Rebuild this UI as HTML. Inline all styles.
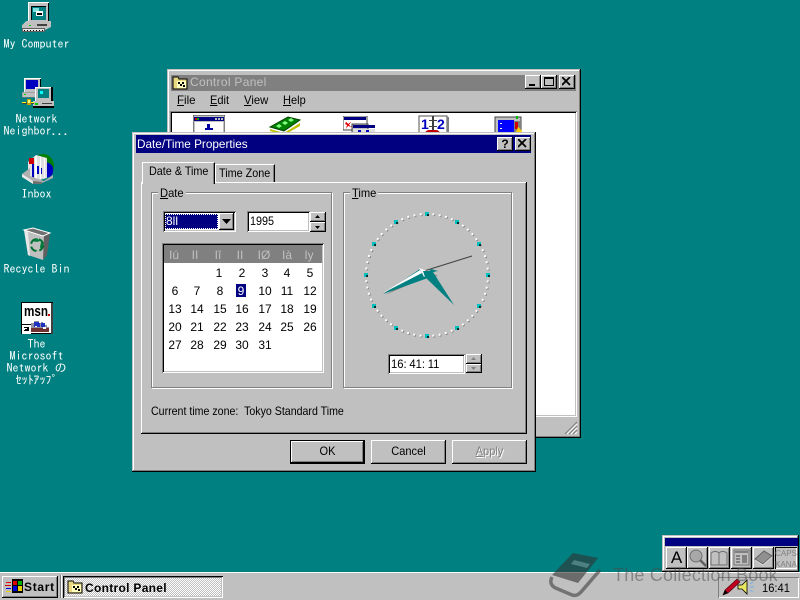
<!DOCTYPE html>
<html><head><meta charset="utf-8">
<style>
html,body{margin:0;padding:0;width:800px;height:600px;overflow:hidden;background:#008080}
*{box-sizing:border-box}
body{position:relative;font-family:"Liberation Sans","Noto Sans CJK JP",sans-serif;font-size:12px;color:#000}
.a,.t,svg.a{position:absolute}
.t{white-space:pre;line-height:14px;transform-origin:0 0}
.g{background:#c0c0c0}
.win{box-shadow:inset -1px -1px #000,inset 1px 1px #c0c0c0,inset -2px -2px #808080,inset 2px 2px #fff;background:#c0c0c0}
.btn{box-shadow:inset -1px -1px #000,inset 1px 1px #fff,inset -2px -2px #808080;background:#c0c0c0}
.sunk{box-shadow:inset 1px 1px #808080,inset -1px -1px #fff,inset 2px 2px #000,inset -2px -2px #c0c0c0;background:#fff}
.etch{border:1px solid #808080;box-shadow:1px 1px #fff,inset 1px 1px #fff}
.lab{font-family:"IPAGothic","Liberation Mono",monospace;color:#fff;font-size:12px;line-height:12px;text-align:center;white-space:pre;position:absolute}
.d{position:absolute;width:22px;text-align:center;font-size:12px;line-height:14px;letter-spacing:0}
u{text-decoration:underline}
.n{display:block;transform-origin:50% 50%;transform:scaleX(.92)}
</style></head><body>

<!-- Desktop icons -->
<svg class="a" style="left:20px;top:0" width="32" height="34" viewBox="0 0 32 34" shape-rendering="crispEdges">
<path d="M8 2h21v20H8z" fill="#c0c0c0"/><path d="M8 2h21v1H9v19H8z" fill="#fff"/><path d="M28 3h1v19h-1z" fill="#000"/>
<path d="M11 6h15v14H11z" fill="#000"/><path d="M12 7h14v13H12z" fill="#008080"/><path d="M13 8h6v4h-6z" fill="#80e0e0"/><path d="M16 11h7v5h-7z" fill="#fff"/><path d="M17 13h5v2h-5z" fill="#000"/>
<path d="M6 21h25v6l-6 3H2v-5z" fill="#c0c0c0"/><path d="M2 28h23v4H2z" fill="#606060"/><path d="M3 29h21v2H3z" fill="#e8e8e8"/><path d="M4 30h1v1h-1zM7 30h1v1H7zM10 30h1v1h-1zM13 30h1v1h-1zM16 30h1v1h-1zM19 30h1v1h-1zM22 30h1v1h-1z" fill="#000"/>
<path d="M9 25h2v1H9z" fill="#0c0"/><path d="M17 24h10v2H17z" fill="#404040"/>
</svg>
<div class="lab" style="left:0;top:38px;width:73px">My Computer</div>

<svg class="a" style="left:21px;top:77px" width="33" height="32" viewBox="0 0 33 32" shape-rendering="crispEdges">
<path d="M3 1h17v17H3z" fill="#c0c0c0"/><path d="M3 1h17v1H4v16H3z" fill="#fff"/><path d="M5 3h12v9H5z" fill="#0000c0"/><path d="M19 2h1v16h-1z" fill="#000"/>
<path d="M1 15h20v5H1z" fill="#c0c0c0" stroke="#808080" stroke-width=".5"/><path d="M3 17h2v1H3z" fill="#0c0"/>
<path d="M14 10h17v16H14z" fill="#c0c0c0"/><path d="M14 10h17v1H15v15h-1z" fill="#fff"/><path d="M30 10h2v16h-2z" fill="#000"/><path d="M17 12h11v9H17z" fill="#008080"/><path d="M19 14h3v3h-3z" fill="#00ffff"/>
<path d="M12 24h21v6H12z" fill="#c0c0c0"/><path d="M12 29h21v2H12z" fill="#000"/><path d="M14 26h3v2h-3z" fill="#0c0"/><path d="M21 26h10v1H21z" fill="#404040"/>
<path d="M1 25h4v1H1zM8 25h5v1H8z" fill="#ff0"/><path d="M1 26h12v1H1z" fill="#404040"/><path d="M6 22h4v6H6z" fill="#c0a000"/><path d="M7 23h2v3H7z" fill="#ffff80"/>
</svg>
<div class="lab" style="left:0;top:113px;width:73px">Network
Neighbor...</div>

<svg class="a" style="left:21px;top:152px" width="34" height="32" viewBox="0 0 34 32">
<ellipse cx="22" cy="14" rx="11" ry="12" fill="#008000"/><path d="M22 10c8 0 11 4 10 10-1 5-5 6-10 6z" fill="#0000c0"/>
<path d="M7 10l8-7 11 3v20l-11 3-8-5z" fill="#e0e0e0"/><path d="M8 6h5v6H8z" fill="#d00000"/><path d="M14 4h2v25h-2zM19 5h1v22h-1zM23 6h1v20h-1z" fill="#fff"/>
<path d="M11 12h2v14h-2z" fill="#0000c0"/><path d="M16 14h2v8h-2zM20 16h1v6h-1z" fill="#0000c0"/>
<path d="M1 22l8-6v8l14 5 9-6v3l-11 5H12L1 25z" fill="#b0b0b0"/><path d="M1 22l11 7 9 3-9 0L1 25z" fill="#e8e8e8"/><path d="M12 29l9 1v2h-9z" fill="#707070"/>
</svg>
<div class="lab" style="left:0;top:188px;width:73px">Inbox</div>

<svg class="a" style="left:22px;top:227px" width="31" height="34" viewBox="0 0 31 34">
<path d="M2 3L11 1l17 5-3 1-3 25-1 1-15-5z" fill="#c0c0c0"/><path d="M2 3l4 25 2 1L6 5z" fill="#e8e8e8"/><path d="M21 33l1-26 6-1-3 22z" fill="#606060"/><path d="M2 3l9-2 17 5-7 3z" fill="#707070" stroke="#fff" stroke-width="1"/>
<path d="M10 14l5-3 3 3-3 1zM19 15l3 5-3 3-1-3zM9 19l4 5h4l-6-1z" fill="#008040"/><circle cx="15" cy="18" r="6" fill="none" stroke="#007030" stroke-width="2" stroke-dasharray="7 3"/>
</svg>
<div class="lab" style="left:0;top:263px;width:73px">Recycle Bin</div>

<svg class="a" style="left:21px;top:302px" width="32" height="32" viewBox="0 0 32 32">
<g shape-rendering="crispEdges"><path d="M0 0h32v32H0z" fill="#000"/><path d="M1 1h29v30H1z" fill="#fff"/><path d="M30 1h2v31h-2z" fill="#404040"/></g>
<text x="3" y="14" font-family="Liberation Sans" font-weight="bold" font-size="15" textLength="24" lengthAdjust="spacingAndGlyphs" fill="#000">msn</text>
<g shape-rendering="crispEdges"><path d="M27 12h2v2h-2z" fill="#d00000"/>
<path d="M6 26h2v-3h2v-2h3v-2h6v1h3v1h2v2h2v2h2v5H6z" fill="#9090a0"/><path d="M13 20h6v5h-6zM20 21h4v4h-4z" fill="#2030c0"/><path d="M10 26h18v4H10z" fill="#703030"/><path d="M18 19h2v2h-2zM14 24h2v1h-2zM22 25h3v2h-3z" fill="#fff"/>
<path d="M0 22h10v10H0z" fill="#fff"/><path d="M0 22h10v1H1v9H0z" fill="#000"/><path d="M3 25h5v1H3zM6 26h2v3H6zM3 29h3v-1H3zM4 27h2v1H4z" fill="#000"/></g>
</svg>
<div class="lab" style="left:0;top:338px;width:73px">The
Microsoft
Network の
ｾｯﾄｱｯﾌﾟ</div>

<!-- Control Panel window -->
<div class="a win" style="left:167px;top:69px;width:414px;height:369px"></div>
<div class="a" style="left:171px;top:75px;width:405px;height:16px;background:#808080"></div>
<svg class="a" style="left:172px;top:76px" width="16" height="14" viewBox="0 0 16 14" shape-rendering="crispEdges"><path d="M1 1h5l1 2h8v10H1z" fill="#e8d880" stroke="#000" stroke-width=".8"/><path d="M5 5h9v7H5z" fill="#ffffc0"/><path d="M6 6h2v2H6zM10 6h2v2h-2zM8 8h2v2H8zM11 9h2v2h-2z" fill="#000"/></svg>
<div class="t" style="left:190px;top:75px;color:#c0c0c0;letter-spacing:.3px">Control Panel</div>
<div class="a btn" style="left:525px;top:75px;width:16px;height:14px"><div class="a" style="left:4px;top:9px;width:6px;height:2px;background:#000"></div></div>
<div class="a btn" style="left:541px;top:75px;width:16px;height:14px"><div class="a" style="left:3px;top:2px;width:10px;height:9px;border:1px solid #000;border-top-width:2px"></div></div>
<div class="a btn" style="left:559px;top:75px;width:16px;height:14px"><svg class="a" style="left:3px;top:2px" width="9" height="9"><path d="M0 0l8 8M8 0l-8 8" stroke="#000" stroke-width="1.800"/></svg></div>
<div class="t" style="left:177px;top:93px;transform:scaleX(.96)"><u>F</u>ile</div>
<div class="t" style="left:210px;top:93px;transform:scaleX(.92)"><u>E</u>dit</div>
<div class="t" style="left:244px;top:93px;transform:scaleX(.94)"><u>V</u>iew</div>
<div class="t" style="left:283px;top:93px;transform:scaleX(.92)"><u>H</u>elp</div>
<div class="a sunk" style="left:170px;top:111px;width:407px;height:306px"></div>
<!-- CP icons -->
<svg class="a" style="left:193px;top:115px" width="32" height="20" viewBox="0 0 32 20" shape-rendering="crispEdges"><path d="M0 0h32v20H0z" fill="#c0c0c0" stroke="#404040"/><path d="M1 2h30v4H1z" fill="#000080"/><path d="M2 3h2v2H2z" fill="#c00"/><path d="M4 3h2v2H4z" fill="#0a0"/><path d="M22 3h2v2h-2zM25 3h2v2h-2zM28 3h2v2h-2z" fill="#c0c0c0"/><path d="M2 7h28v13H2z" fill="#fff"/><path d="M14 9h3v4h-3zM12 13h8v2h-8z" fill="#0000a0"/></svg>
<svg class="a" style="left:268px;top:115px" width="34" height="20" viewBox="0 0 34 20"><path d="M2 12L20 2l12 3-16 11z" fill="#008000" stroke="#004000"/><path d="M8 11l3-2 3 2-3 2zM14 8l3-2 3 2-3 2zM20 5l3-2 3 2-3 2z" fill="#80ff80"/><path d="M2 14l14 4 16-10v3L16 20 2 16z" fill="#c0c000"/><path d="M4 17l12 3h8l-8 0z" fill="#606060"/></svg>
<svg class="a" style="left:343px;top:116px" width="33" height="19" viewBox="0 0 33 19" shape-rendering="crispEdges"><path d="M0 0h24v14H0z" fill="#fff" stroke="#404040"/><path d="M1 1h22v3H1z" fill="#000080"/><path d="M3 6l2 2 3-2-2 3 3 2-4-1-2 3 1-4-2-1z" fill="#e00000"/><path d="M9 8h16v11H9z" fill="#c0c0c0" stroke="#404040"/><path d="M10 9h22v3H10z" fill="#000080"/><path d="M10 13h22v6H10z" fill="#e0e0e0"/><path d="M15 14h3v4h-3zM23 14h3v4h-3z" fill="#0000c0"/></svg>
<svg class="a" style="left:418px;top:115px" width="31" height="20" viewBox="0 0 31 20" shape-rendering="crispEdges"><path d="M1 1h28v19H1z" fill="#fff" stroke="#505050"/><path d="M29 2h2v18h-2z" fill="#808080"/><path d="M14 1h2v14h-2zM11 5h8v1h-8zM11 11h8v1h-8z" fill="#404040"/></svg>
<div class="t" style="left:421px;top:117px;font-weight:bold;font-size:14px;color:#0000c0;letter-spacing:0">1</div>
<div class="t" style="left:437px;top:117px;font-weight:bold;font-size:14px;color:#0000c0;letter-spacing:0">2</div>
<div class="a" style="left:425px;top:130px;width:15px;height:4px;background:#c00000;border-radius:7px 7px 0 0"></div>
<svg class="a" style="left:494px;top:115px" width="30" height="20" viewBox="0 0 30 20" shape-rendering="crispEdges"><path d="M1 2h26v18H1z" fill="#c0c0c0" stroke="#404040"/><path d="M4 5h16v15H4z" fill="#0000ff"/><path d="M6 8h2v1H6zM6 13h2v1H6z" fill="#fff"/><path d="M20 6h6v14h-6z" fill="#808080"/><path d="M21 4h3V1h-2v3z" fill="#00c000"/><path d="M21 7h3v7h-3z" fill="#d00000"/><path d="M24 12l4 4-3 4-3-3z" fill="#ffd000"/></svg>
<!-- Resize grip -->
<svg class="a" style="left:564px;top:421px" width="14" height="14"><path d="M13 1L1 13M13 5l-8 8M13 9l-4 4" stroke="#808080" stroke-width="1.200"/><path d="M13 3L3 13M13 7l-6 6M13 11l-2 2" stroke="#fff" stroke-width="1"/></svg>

<!-- Dialog -->
<div class="a win" style="left:132px;top:132px;width:404px;height:340px"></div>
<div class="a" style="left:136px;top:135px;width:395px;height:18px;background:#000080"></div>
<div class="t" style="left:137px;top:137px;color:#fff;transform:scaleX(.98)">Date/Time Properties</div>
<div class="a btn" style="left:497px;top:137px;width:16px;height:14px;font-weight:bold;font-size:12px;line-height:14px;text-align:center">?</div>
<div class="a btn" style="left:515px;top:137px;width:16px;height:14px"><svg class="a" style="left:3px;top:2px" width="9" height="9"><path d="M0 0l8 8M8 0l-8 8" stroke="#000" stroke-width="1.800"/></svg></div>

<!-- Tab panel -->
<div class="a" style="left:141px;top:182px;width:386px;height:252px;box-shadow:inset -1px -1px #000,inset 1px 1px #fff,inset -2px -2px #808080"></div>
<div class="a" style="left:215px;top:164px;width:60px;height:18px;background:#c0c0c0;border-top:1px solid #fff;border-left:1px solid #fff;border-right:1px solid #000;box-shadow:inset -1px 0 #808080"></div>
<div class="t" style="left:219px;top:166px;transform:scaleX(.9)">Time Zone</div>
<div class="a" style="left:142px;top:162px;width:73px;height:22px;background:#c0c0c0;border-top:1px solid #fff;border-left:1px solid #fff;border-right:1px solid #000;box-shadow:inset -1px 0 #808080"></div>
<div class="t" style="left:149px;top:164px;transform:scaleX(.9)">Date &amp; Time</div>

<!-- Groups -->
<div class="a etch" style="left:151px;top:192px;width:181px;height:196px"></div>
<div class="a g" style="left:158px;top:186px;width:28px;height:14px"></div>
<div class="t" style="left:160px;top:186px;transform:scaleX(.93)"><u>D</u>ate</div>
<div class="a etch" style="left:343px;top:192px;width:169px;height:196px"></div>
<div class="a g" style="left:350px;top:186px;width:28px;height:14px"></div>
<div class="t" style="left:352px;top:186px;transform:scaleX(.93)"><u>T</u>ime</div>

<!-- Month combo -->
<div class="a sunk" style="left:163px;top:211px;width:73px;height:21px"></div>
<div class="a" style="left:165px;top:214px;width:53px;height:15px;background:#000080;outline:1px dotted #fff;outline-offset:-1px"></div>
<div class="t" style="left:166px;top:214px;color:#fff">8ll</div>
<div class="a btn" style="left:219px;top:213px;width:15px;height:17px"><svg class="a" style="left:3px;top:6px" width="9" height="5"><path d="M0 0h9L4.500 5z" fill="#000"/></svg></div>

<!-- Year -->
<div class="a sunk" style="left:247px;top:211px;width:63px;height:21px"></div>
<div class="t" style="left:250px;top:214px;transform:scaleX(.9)">1995</div>
<div class="a btn" style="left:310px;top:212px;width:16px;height:10px"><svg class="a" style="left:5px;top:3px" width="6" height="3"><path d="M0 3h5L2.500 0z" fill="#000"/></svg></div>
<div class="a btn" style="left:310px;top:222px;width:16px;height:10px"><svg class="a" style="left:5px;top:4px" width="6" height="3"><path d="M0 0h5L2.500 3z" fill="#000"/></svg></div>

<!-- Calendar -->
<div class="a sunk" style="left:162px;top:243px;width:162px;height:130px"></div>
<div class="a" style="left:164px;top:245px;width:158px;height:18px;background:#808080"></div>
<div class="d" style="left:163px;top:248px;color:#c0c0c0">Iú</div>
<div class="d" style="left:184px;top:248px;color:#c0c0c0">II</div>
<div class="d" style="left:207px;top:248px;color:#c0c0c0">Iî</div>
<div class="d" style="left:229px;top:248px;color:#c0c0c0">II</div>
<div class="d" style="left:253px;top:248px;color:#c0c0c0">IØ</div>
<div class="d" style="left:276px;top:248px;color:#c0c0c0">Ià</div>
<div class="d" style="left:298px;top:248px;color:#c0c0c0">Iy</div>
<div class="a" style="left:236px;top:284px;width:10px;height:13px;background:#000080"></div>
<div class="d" style="left:208px;top:266px">1</div><div class="d" style="left:231px;top:266px">2</div><div class="d" style="left:254px;top:266px">3</div><div class="d" style="left:276px;top:266px">4</div><div class="d" style="left:299px;top:266px">5</div>
<div class="d" style="left:164px;top:284px">6</div><div class="d" style="left:186px;top:284px">7</div><div class="d" style="left:209px;top:284px">8</div><div class="d" style="left:230px;top:284px;color:#fff">9</div><div class="d" style="left:254px;top:284px">10</div><div class="d" style="left:276px;top:284px">11</div><div class="d" style="left:299px;top:284px">12</div>
<div class="d" style="left:164px;top:302px">13</div><div class="d" style="left:186px;top:302px">14</div><div class="d" style="left:209px;top:302px">15</div><div class="d" style="left:231px;top:302px">16</div><div class="d" style="left:254px;top:302px">17</div><div class="d" style="left:276px;top:302px">18</div><div class="d" style="left:299px;top:302px">19</div>
<div class="d" style="left:164px;top:320px">20</div><div class="d" style="left:186px;top:320px">21</div><div class="d" style="left:209px;top:320px">22</div><div class="d" style="left:231px;top:320px">23</div><div class="d" style="left:254px;top:320px">24</div><div class="d" style="left:276px;top:320px">25</div><div class="d" style="left:299px;top:320px">26</div>
<div class="d" style="left:164px;top:338px">27</div><div class="d" style="left:186px;top:338px">28</div><div class="d" style="left:209px;top:338px">29</div><div class="d" style="left:231px;top:338px">30</div><div class="d" style="left:254px;top:338px">31</div>

<!-- Clock -->
<svg class="a" style="left:345px;top:200px" width="170" height="190" viewBox="0 0 170 190">
<circle cx="82.800" cy="75.800" r="61" fill="none" stroke="#808080" stroke-width="2" stroke-dasharray="2 4.388" transform="rotate(-90 82.800 75.800)" stroke-dashoffset="1"/>
<circle cx="82" cy="75" r="61" fill="none" stroke="#fff" stroke-width="2" stroke-dasharray="2 4.388" transform="rotate(-90 82 75)" stroke-dashoffset="1"/>
<g shape-rendering="crispEdges">
<path d="M80 12h4v4h-4zM110 20h4v4h-4zM132 42h4v4h-4zM141 73h4v4h-4zM132 104h4v4h-4zM110 126h4v4h-4zM80 134h4v4h-4zM49 126h4v4h-4zM27 104h4v4h-4zM19 73h4v4h-4zM27 42h4v4h-4zM49 20h4v4h-4z" fill="#00c0c0"/>
<path d="M82 14h2v2h-2zM112 22h2v2h-2zM134 44h2v2h-2zM143 75h2v2h-2zM134 106h2v2h-2zM112 128h2v2h-2zM82 136h2v2h-2zM51 128h2v2h-2zM29 106h2v2h-2zM21 75h2v2h-2zM29 44h2v2h-2zM51 22h2v2h-2z" fill="#003030"/>
</g>
<path d="M79 71L127 56" stroke="#404040" stroke-width="1" fill="none"/>
<path d="M40 95L79 78l14-2-12-5z" fill="#808080"/>
<path d="M38 94L75 69l8 9z" fill="#008080"/>
<path d="M38 93L75 70l2 3z" fill="#fff"/>
<path d="M80 77L109 105 88 72l5-1-7-2z" fill="#008080"/>
<path d="M74 68l8 3 9 0-7 2-5 4-2-4z" fill="#fff"/>
<path d="M78 71l13-0-7 3-4 3z" fill="#008080"/>
</svg>

<!-- Time edit -->
<div class="a sunk" style="left:388px;top:354px;width:77px;height:20px"></div>
<div class="t" style="left:391px;top:357px;word-spacing:-.5px;transform:scaleX(.94)">16: 41: 11</div>
<div class="a btn" style="left:466px;top:354px;width:16px;height:10px"><svg class="a" style="left:5px;top:3px" width="6" height="3"><path d="M0 3h5L2.500 0z" fill="#808080"/></svg></div>
<div class="a btn" style="left:466px;top:364px;width:16px;height:9px"><svg class="a" style="left:5px;top:3px" width="6" height="3"><path d="M0 0h5L2.500 3z" fill="#808080"/></svg></div>

<div class="t" style="left:151px;top:404px;transform:scaleX(.885)">Current time zone:  Tokyo Standard Time</div>

<!-- Buttons -->
<div class="a" style="left:290px;top:440px;width:75px;height:24px;background:#000"></div>
<div class="a btn" style="left:291px;top:441px;width:73px;height:22px;text-align:center;line-height:21px"><span class="n">OK</span></div>
<div class="a btn" style="left:371px;top:440px;width:75px;height:24px;text-align:center;line-height:22px"><span class="n">Cancel</span></div>
<div class="a btn" style="left:452px;top:440px;width:75px;height:24px;text-align:center;line-height:23px;color:#808080;text-shadow:1px 1px #fff"><span class="n"><u>A</u>pply</span></div>

<!-- IME bar -->
<div class="a win" style="left:662px;top:535px;width:137px;height:37px"></div>
<div class="a" style="left:665px;top:538px;width:133px;height:8px;background:#000080"></div>
<div class="a btn" style="left:666px;top:547px;width:21px;height:22px;font-size:17px;line-height:22px;text-align:center">A</div>
<div class="a btn" style="left:687px;top:547px;width:21px;height:22px"><svg class="a" style="left:1px;top:2px" width="19" height="18" viewBox="0 0 19 18"><circle cx="8" cy="7" r="6" fill="#a8a8a8" stroke="#707070"/><path d="M12 11l6 6" stroke="#606060" stroke-width="2.500"/></svg></div>
<div class="a btn" style="left:709px;top:547px;width:21px;height:22px"><svg class="a" style="left:1px;top:3px" width="19" height="16" viewBox="0 0 19 16"><path d="M1 3c3-2 6-2 8 0 2-2 5-2 8 0v12H1z" fill="#c0c0c0" stroke="#707070"/><path d="M9 3v12" stroke="#707070"/></svg></div>
<div class="a btn" style="left:731px;top:547px;width:21px;height:22px"><svg class="a" style="left:2px;top:2px" width="17" height="17" viewBox="0 0 17 17" shape-rendering="crispEdges"><path d="M1 1h15v15H1z" fill="#c0c0c0" stroke="#707070"/><path d="M2 2h13v2H2zM3 6h4v2H3zM3 9h4v2H3zM3 12h4v2H3zM9 6h5v8H9z" fill="#808080"/></svg></div>
<div class="a btn" style="left:753px;top:547px;width:21px;height:22px"><svg class="a" style="left:1px;top:3px" width="19" height="16" viewBox="0 0 19 16"><path d="M1 9l9-8 8 5-9 8z" fill="#909090" stroke="#606060"/><path d="M1 10l8 5 9-8" stroke="#d8d8d8" fill="none"/></svg></div>
<div class="a" style="left:775px;top:547px;width:22px;height:22px;box-shadow:inset 1px 1px #000,inset -1px -1px #fff;background:#c0c0c0;color:#808080;font-size:8px;line-height:11px;text-align:center;padding-top:1px">CAPS<br>KANA</div>

<!-- Taskbar -->
<div class="a" style="left:0;top:572px;width:800px;height:28px;background:#c0c0c0;border-top:1px solid #fff"></div>
<div class="a btn" style="left:2px;top:576px;width:56px;height:22px"></div>
<svg class="a" style="left:5px;top:578px" width="19" height="18" viewBox="0 0 19 18" shape-rendering="crispEdges"><path d="M7 1h11v14H7z" fill="#000"/><path d="M8 3h4v4H8z" fill="#e00000"/><path d="M13 3h4v4h-4z" fill="#00b000"/><path d="M8 8h4v5H8z" fill="#0000e0"/><path d="M13 8h4v5h-4z" fill="#e8d000"/><path d="M1 4h5v1H1zM0 7h6v1H0z" fill="#e00000"/><path d="M1 10h5v1H1z" fill="#0000e0"/><path d="M1 13h5v1H1z" fill="#e8d000"/></svg>
<div class="t" style="left:24px;top:580px;font-weight:bold;font-size:12px;letter-spacing:.7px">Start</div>
<div class="a" style="left:60px;top:575px;width:2px;height:23px;background:#808080;border-right:1px solid #fff"></div>
<div class="a" style="left:63px;top:576px;width:160px;height:22px;box-shadow:inset 1px 1px #000,inset -1px -1px #fff,inset 2px 2px #808080,inset -2px -2px #c0c0c0"></div>
<div class="a" style="left:65px;top:578px;width:156px;height:18px;background:repeating-conic-gradient(#fff 0 25%,#c0c0c0 0 50%) 0 0/2px 2px"></div>
<svg class="a" style="left:67px;top:580px" width="16" height="14" viewBox="0 0 16 14" shape-rendering="crispEdges"><path d="M1 1h5l1 2h8v10H1z" fill="#e8d880" stroke="#000" stroke-width=".8"/><path d="M5 5h9v7H5z" fill="#ffffc0"/><path d="M6 6h2v2H6zM10 6h2v2h-2zM8 8h2v2H8zM11 9h2v2h-2z" fill="#000"/></svg>
<div class="t" style="left:85px;top:581px;font-weight:bold;letter-spacing:.3px">Control Panel</div>
<div class="a" style="left:718px;top:577px;width:81px;height:21px;box-shadow:inset 1px 1px #808080,inset -1px -1px #fff"></div>
<svg class="a" style="left:720px;top:577px" width="44" height="21" viewBox="0 0 44 21"><path d="M3 18l2-5L17 2l3 3L8 16z" fill="#c00020" stroke="#400" stroke-width=".6"/><path d="M3 18l2-5 3 3z" fill="#000"/><path d="M18 8h4l5-5v14l-5-5h-4z" fill="#e8e860" stroke="#000" stroke-width=".8"/><path d="M30 7l3-2M30 10h4M30 13l3 2" stroke="#70b0e0" stroke-width="1"/></svg>
<div class="t" style="left:762px;top:581px;transform:scaleX(.93)">16:41</div>

<!-- Watermark -->
<svg class="a" style="left:548px;top:552px" width="54" height="48" viewBox="0 0 54 48" opacity=".6">
<path d="M25 1L50 6 30 31 4 23z" fill="#333"/>
<path d="M26 8l16 4-3 4-16-4z" fill="#808080"/>
<path d="M4 25c-3 6 0 10 6 12l14 6c4 1 6 0 9-3l19-22" fill="none" stroke="#404040" stroke-width="3.500"/>
</svg>
<div class="t" style="left:613px;top:564px;font-size:18px;line-height:22px;letter-spacing:.2px;color:#4a4a4a;opacity:.5">The Collection Book</div>
</body></html>
